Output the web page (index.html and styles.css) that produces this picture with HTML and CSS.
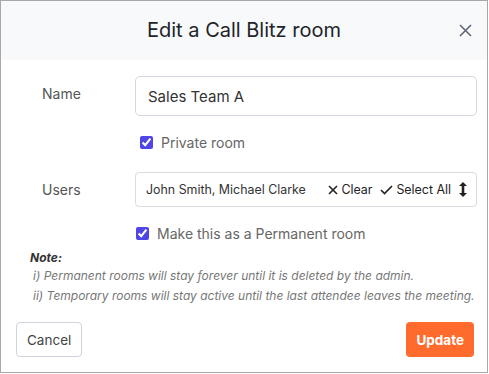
FILE: index.html
```html
<!DOCTYPE html>
<html lang="en">
<head>
    <meta charset="UTF-8">
    <title>Edit a Call Blitz room</title>
    <link rel="stylesheet" href="styles.css">
</head>
<body>
    <div class="modal">
        <header class="modal-header">
            <h2>Edit a Call Blitz room</h2>
            <button type="button" class="close" aria-label="Close">
                <svg width="13" height="13" viewBox="0 0 13 13"><path d="M1 1L12 12M12 1L1 12" stroke="#5f6675" stroke-width="1.6" fill="none"/></svg>
            </button>
        </header>

        <form class="modal-body">
            <div class="row name-row">
                <label for="roomName">Name</label>
                <input type="text" id="roomName" value="Sales Team A">
            </div>
            <div class="check private-check">
                <input type="checkbox" id="privateRoom" checked>
                <label for="privateRoom">Private room</label>
            </div>

            <div class="row users-row">
                <label>Users</label>
                <div class="users-select">
                    <span class="users-value">John Smith, Michael Clarke</span>
                    <span class="users-action">
                        <svg width="10" height="10" viewBox="0 0 10 10"><path d="M1 1L9 9M9 1L1 9" stroke="#222" stroke-width="1.6" fill="none"/></svg>
                        Clear
                    </span>
                    <span class="users-action">
                        <svg width="13" height="10" viewBox="0 0 13 10"><path d="M1 5L4.5 8.5L12 1" stroke="#222" stroke-width="1.6" fill="none"/></svg>
                        Select All
                    </span>
                    <svg class="sort" width="8" height="15" viewBox="0 0 8 15"><path d="M4 0L8 4H5.3V11H8L4 15L0 11H2.7V4H0Z" fill="#222"/></svg>
                </div>
            </div>
            <div class="check permanent-check">
                <input type="checkbox" id="permanentRoom" checked>
                <label for="permanentRoom">Make this as a Permanent room</label>
            </div>

            <div class="note">
                <h4>Note:</h4>
                <p>i) Permanent rooms will stay forever until it is deleted by the admin.</p>
                <p>ii) Temporary rooms will stay active until the last attendee leaves the meeting.</p>
            </div>
        </form>

        <footer class="modal-footer">
            <button type="button" class="cancel">Cancel</button>
            <button type="button" class="update">Update</button>
        </footer>
    </div>
</body>
</html>
```

FILE: styles.css
```css
body {
    margin: 0;
    font-family: 'Inter', 'Liberation Sans', sans-serif;
    background-color: #fff;
}

.modal {
    width: 486px;
    height: 371px;
    border: 1px solid #a8a8a8;
    background-color: #fff;
    display: flex;
    flex-direction: column;
}

.modal-header {
    height: 59px;
    background-color: #f8f9fb;
    display: flex;
    align-items: center;
    justify-content: center;
    position: relative;
}

.modal-header h2 {
    margin: 0 0 1px;
    font-size: 20px;
    font-weight: 400;
    color: #212529;
}

.close {
    position: absolute;
    right: 15px;
    top: 23px;
    border: none;
    background: none;
    padding: 0;
    display: flex;
}

.modal-body {
    margin: 0;
    padding: 16px 10px 0 0;
    display: flex;
    flex-direction: column;
}

.row {
    display: flex;
    align-items: center;
}

.row > label {
    width: 93px;
    padding-left: 41px;
    font-size: 14px;
    color: #555;
}

.name-row > label {
    align-self: flex-start;
    padding-top: 9px;
}

.name-row input {
    flex: 1;
    height: 40px;
    box-sizing: border-box;
    border: 1px solid #d3d7e0;
    border-radius: 5px;
    padding: 0 12px;
    font-family: inherit;
    font-size: 15px;
    color: #333;
}

.check {
    display: flex;
    align-items: center;
    gap: 8px;
    font-size: 14px;
    color: #666;
}

.check input {
    margin: 0;
    width: 13px;
    height: 13px;
    accent-color: #4f46e5;
}

.private-check {
    margin: 18px 0 0 139px;
}

.users-row {
    margin-top: 21px;
}

.users-select {
    flex: 1;
    height: 35px;
    box-sizing: border-box;
    border: 1px solid #d9dce3;
    border-radius: 4px;
    display: flex;
    align-items: center;
    padding: 0 9px 0 10px;
    font-size: 12.4px;
    color: #333;
}

.users-value {
    flex: 1;
}

.users-action {
    display: flex;
    align-items: center;
    gap: 3px;
    margin-right: 8px;
    color: #222;
}

.sort {
    margin-left: 0;
}

.permanent-check {
    margin: 18px 0 0 135px;
}

.note {
    margin: 8px 0 0 29px;
    font-size: 12px;
    font-style: italic;
    color: #777;
}

.note h4 {
    margin: 0 0 1px;
    font-size: 12px;
    font-weight: 700;
    color: #333;
}

.note p {
    margin: 0 0 0 3px;
    line-height: 20px;
}

.modal-footer {
    margin-top: auto;
    padding: 0 13px 15px 15px;
    display: flex;
    justify-content: space-between;
}

.modal-footer button {
    height: 35px;
    border-radius: 4px;
    font-family: inherit;
    font-size: 13.5px;
    padding: 0 10px;
    cursor: pointer;
}

.cancel {
    background-color: #fff;
    border: 1px solid #cfd3dc;
    color: #444;
}

.update {
    background-color: #ff6b2c;
    border: none;
    color: #fff;
    font-weight: 700;
}
```
